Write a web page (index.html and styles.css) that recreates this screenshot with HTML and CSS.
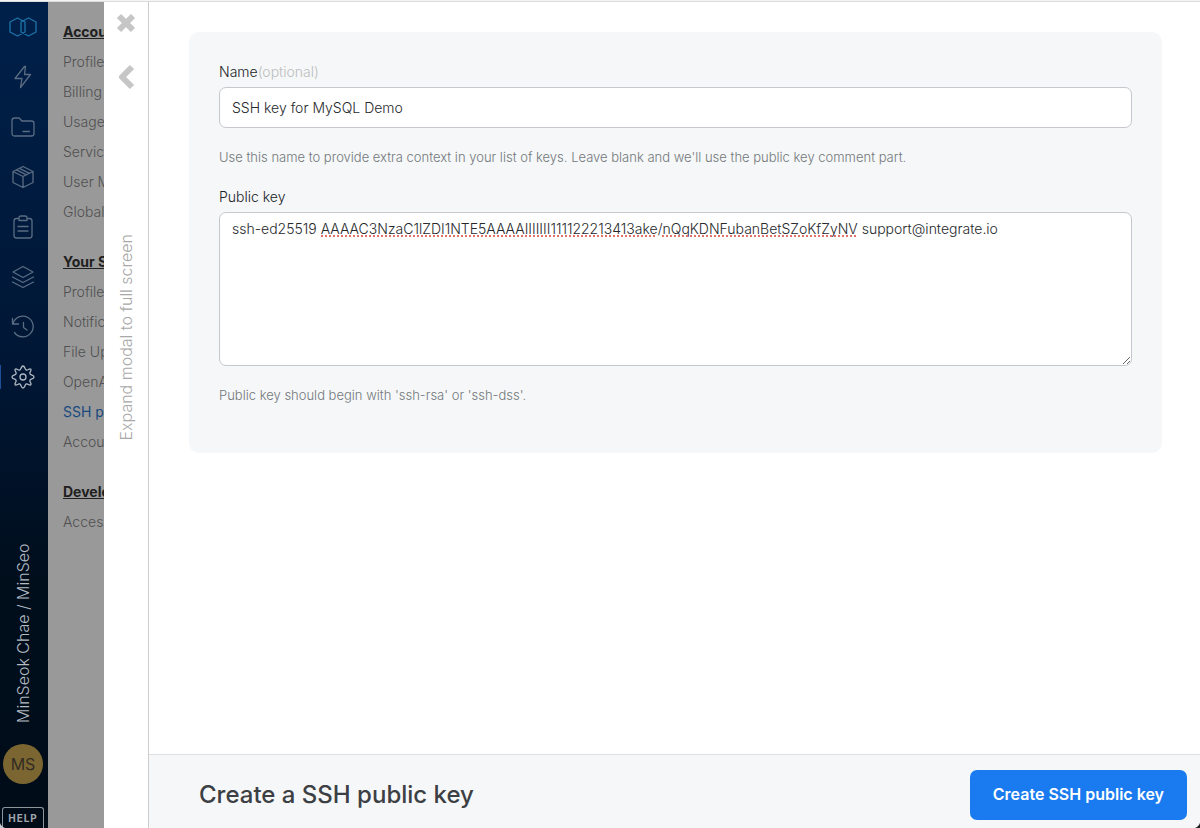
FILE: index.html
```
<!DOCTYPE html>
<html lang="en">
<head>
<meta charset="utf-8">
<meta name="viewport" content="width=device-width, initial-scale=1">
<title>Create a SSH public key</title>
<link rel="stylesheet" href="styles.css">
</head>
<body>
<div class="app">
  <nav class="rail" aria-label="Main">
    <a class="rail-link logo" href="#" aria-label="Home"><svg width="28" height="20" viewBox="0 0 28 20"><path d="M8.500 1 16 5V15L8.500 19 1 15V5ZM19.500 1 27 5V15L19.500 19 12 15V5Z"/></svg></a>
    <a class="rail-link" href="#" aria-label="Connections"><svg width="24" height="24" viewBox="0 0 24 24"><path d="M13.500 1.500 4 13.500H11L9.500 22.500 19.500 9.500H13.500L14.500 1.500Z"/></svg></a>
    <a class="rail-link" href="#" aria-label="Files"><svg width="24" height="24" viewBox="0 0 24 24"><path d="M1 18.500V5.500Q1 3 3.500 3H7.500Q8.500 3 9.200 4L10.800 6H20.500Q23 6 23 8.500V18.500Q23 21 20.500 21H3.500Q1 21 1 18.500ZM12 16.500H18.500"/></svg></a>
    <a class="rail-link" href="#" aria-label="Packages"><svg width="24" height="24" viewBox="0 0 24 24"><path d="M12 1.500 22 6.500V17.500L12 22.500 2 17.500V6.500ZM2 6.500 12 11.500 22 6.500M12 11.500V22.500M5.500 4.800 15.500 9.800M8.500 3.300 18.500 8.300"/></svg></a>
    <a class="rail-link" href="#" aria-label="Jobs"><svg width="24" height="24" viewBox="0 0 24 24"><path d="M8 3.500H5.500Q3 3.500 3 6V20.500Q3 23 5.500 23H18.500Q21 23 21 20.500V6Q21 3.500 18.500 3.500H16M8 5.500V3Q8 1 10 1H14Q16 1 16 3V5.500ZM7 11.500H17M7 16H17"/></svg></a>
    <a class="rail-link" href="#" aria-label="Layers"><svg width="24" height="24" viewBox="0 0 24 24"><path d="M12 1.500 22 7 12 12.500 2 7ZM1.500 12 12 17.500 22.500 12M1.500 17 12 22.500 22.500 17"/></svg></a>
    <a class="rail-link" href="#" aria-label="History"><svg width="24" height="24" viewBox="0 0 24 24"><path d="M1.500 3.500V9H7.500M2 8.500A10.300 10.300 0 1 1 3.500 17.500M12.500 7.500V12.500L16 15"/></svg></a>
    <a class="rail-link active" href="#" aria-label="Settings"><svg width="24" height="24" viewBox="0 0 24 24"><circle cx="12" cy="12" r="3"/><path d="M12 1C14 1 13.600 4.400 15.300 5.100S18.400 2.800 19.800 4.200 18.200 7 18.900 8.700 23 10 23 12 19.600 13.600 18.900 15.300 21.200 18.400 19.800 19.800 17 18.200 15.300 18.900 14 23 12 23 10.400 19.600 8.700 18.900 5.600 21.200 4.200 19.800 5.800 17 5.100 15.300 1 14 1 12 4.400 10.400 5.100 8.700 2.800 5.600 4.200 4.200 7 5.800 8.700 5.100 10 1 12 1Z"/></svg></a>
    <div class="rail-foot">
      <span class="user">MinSeok Chae / MinSeok</span>
      <span class="avatar">MS</span>
      <button class="help" type="button">HELP</button>
    </div>
  </nav>

  <nav class="menu" aria-label="Settings">
    <section class="group">
      <h2>Account settings</h2>
      <a href="#">Profile</a>
      <a href="#">Billing</a>
      <a href="#">Usage</a>
      <a href="#">Service</a>
      <a href="#">User Management</a>
      <a href="#">Global</a>
    </section>
    <section class="group">
      <h2>Your Settings</h2>
      <a href="#">Profile</a>
      <a href="#">Notifications</a>
      <a href="#">File Uploads</a>
      <a href="#">OpenAPI</a>
      <a class="current" href="#">SSH public keys</a>
      <a href="#">Accounts</a>
    </section>
    <section class="group">
      <h2>Developer</h2>
      <a href="#">Access</a>
    </section>
  </nav>

  <div class="drawer" role="dialog" aria-labelledby="dialog-title">
    <div class="strip">
      <button class="icon-button" type="button" aria-label="Close"><svg width="22" height="22" viewBox="0 0 22 22"><path d="M4 4 18 18M18 4 4 18"/></svg></button>
      <button class="expand" type="button">
        <svg width="20" height="26" viewBox="0 0 20 26"><path d="M16 3 6 13 16 23"/></svg>
        <span>Expand modal to full screen</span>
      </button>
    </div>
    <form class="panel">
      <div class="content">
        <div class="card">
          <label for="key-name">Name<span class="optional">(optional)</span></label>
          <input class="field" id="key-name" type="text" value="SSH key for MySQL Demo" aria-describedby="name-help">
          <p class="hint" id="name-help">Use this name to provide extra context in your list of keys. Leave blank and we'll use the public key comment part.</p>
          <label for="public-key">Public key</label>
          <div class="key-box">
            <textarea class="field" id="public-key" spellcheck="false" aria-describedby="key-help">ssh-ed25519 AAAAC3NzaC1lZDI1NTE5AAAAIIIIIII111122213413ake/nQqKDNFubanBetSZoKfZyNV support@integrate.io</textarea>
            <i class="spelling first"></i><i class="spelling second"></i>
          </div>
          <p class="hint" id="key-help">Public key should begin with 'ssh-rsa' or 'ssh-dss'.</p>
        </div>
      </div>
      <footer class="footer">
        <h1 id="dialog-title">Create a SSH public key</h1>
        <button class="submit" type="submit">Create SSH public key</button>
      </footer>
    </form>
  </div>
</div>
</body>
</html>
```
FILE: styles.css
```
* { box-sizing: border-box; }

body {
  margin: 0;
  font-family: Inter, "Liberation Sans", sans-serif;
  color: #3c4044;
  background: #fff;
}

button, input, textarea { font: inherit; color: inherit; }
button { border: 0; padding: 0; background: none; cursor: pointer; }
a { text-decoration: none; color: inherit; }
svg { display: block; fill: none; stroke: currentColor; stroke-linecap: round; stroke-linejoin: round; }

.app {
  position: relative;
  display: flex;
  height: 100vh;
  padding-top: 1px;
  background: #dcdcdc;
  border-top: 1px solid #f4f4f4;
  overflow: hidden;
}

/* Rounded window corners showing what lies behind */
.app::before, .app::after {
  content: "";
  position: absolute;
  bottom: 0;
  width: 8px;
  height: 8px;
}
.app::before { left: 0; background: radial-gradient(circle at 100% 0, transparent 8px, #c5c9cf 9px); }
.app::after { right: 0; background: radial-gradient(circle at 0 0, transparent 8px, #222 9px); }

.rail {
  display: flex;
  flex-direction: column;
  flex: 0 0 48px;
  background: linear-gradient(#00204a, #001634 45%, #000e1c 70%, #000c18);
}

.rail-link {
  display: flex;
  flex: 0 0 50px;
  align-items: center;
  justify-content: center;
  padding-right: 2px;
  color: #5a6c82;
}
.rail-link svg { stroke-width: 1.3; }
.logo { color: #1c74a8; }
.active {
  color: #b0b8c2;
  background: linear-gradient(#1b4f96, #1b4f96) left center / 1px 24px no-repeat;
}

.rail-foot {
  display: flex;
  flex-direction: column;
  align-items: center;
  margin-top: auto;
  padding-right: 2px;
}

.user {
  height: 180px;
  overflow: hidden;
  writing-mode: vertical-rl;
  transform: rotate(180deg);
  white-space: nowrap;
  font-size: 16px;
  font-weight: 300;
  line-height: 20px;
  color: #b4bbc3;
}

.avatar {
  width: 40px;
  margin: 21px 0 23px;
  border-radius: 50%;
  background: #7b6632;
  color: #332c22;
  font-size: 16px;
  line-height: 40px;
  text-align: center;
}

.help {
  width: 42px;
  height: 21px;
  border: 1px solid #8d949b;
  border-bottom: 0;
  border-radius: 3px 3px 0 0;
  color: #a0a6ac;
  font-size: 10px;
  font-weight: 700;
  letter-spacing: 1px;
}

.menu {
  flex: 0 0 56px;
  padding: 15px 0 0 15px;
  overflow: hidden;
  background: #999;
  color: #505050;
  font-size: 14px;
  font-weight: 300;
  line-height: 30px;
  white-space: nowrap;
}
.group { margin-bottom: 20px; }
.group h2 {
  margin: 0;
  color: #202020;
  font-size: 14px;
  font-weight: 700;
  line-height: 30px;
  text-decoration: underline;
}
.group a { display: block; }
.group .current { color: #17497f; font-weight: 400; }

.drawer { display: flex; flex: 1; min-width: 0; background: #fff; }

.strip {
  display: flex;
  flex-direction: column;
  align-items: center;
  flex: 0 0 45px;
  border-right: 1px solid #ccc;
}
.icon-button { margin-top: 10px; color: #c6c6c6; }
.strip svg { stroke-width: 6; stroke-linecap: butt; }
.expand {
  display: flex;
  flex-direction: column;
  align-items: center;
  gap: 144px;
  margin-top: 30px;
  color: #c6c6c6;
}
.expand span {
  writing-mode: vertical-rl;
  transform: rotate(180deg);
  font-size: 16px;
  font-weight: 300;
  line-height: 20px;
  color: #a8a8a8;
}

.panel { display: flex; flex: 1; flex-direction: column; min-width: 0; }
.content { flex: 1; padding: 30px 38px 30px 40px; overflow: auto; }
.card {
  display: flex;
  flex-direction: column;
  padding: 30px 30px 28px;
  border-radius: 10px;
  background: #f5f7f8;
  font-size: 14px;
  line-height: 20px;
}
.card label { color: #202326; font-weight: 300; }
.card .optional { color: #bcbec0; }

.field {
  display: block;
  width: 100%;
  margin-top: 5px;
  padding: 0 12px;
  border: 1px solid #c5c8cc;
  border-radius: 7px;
  background: #fff;
  color: #26292c;
  font-weight: 300;
  outline: 0;
}
input.field { height: 41px; }
textarea.field { height: 154px; padding: 6px 12px; resize: vertical; }

.hint {
  margin: 19px 0 20px;
  color: #73777b;
  font-size: 13px;
  font-weight: 300;
  line-height: 20px;
}

.key-box { position: relative; }
.spelling {
  position: absolute;
  top: 28px;
  height: 2px;
  background: repeating-linear-gradient(90deg, #e0726c 0 2px, transparent 2px 4px);
}
.first { left: 102px; width: 336px; }
.second { left: 443px; width: 195px; }

.footer {
  display: flex;
  align-items: center;
  justify-content: space-between;
  min-height: 74px;
  padding: 6px 13px 0 50px;
  border-top: 1px solid #dde0e2;
  background: #f5f7f8;
}
.footer h1 { margin: 0; font-size: 24px; font-weight: 500; line-height: 32px; }
.submit {
  padding: 14px 23px 16px;
  border-radius: 7px;
  background: #197bef;
  color: #fff;
  font-size: 16px;
  font-weight: 600;
  line-height: 20px;
}
```
